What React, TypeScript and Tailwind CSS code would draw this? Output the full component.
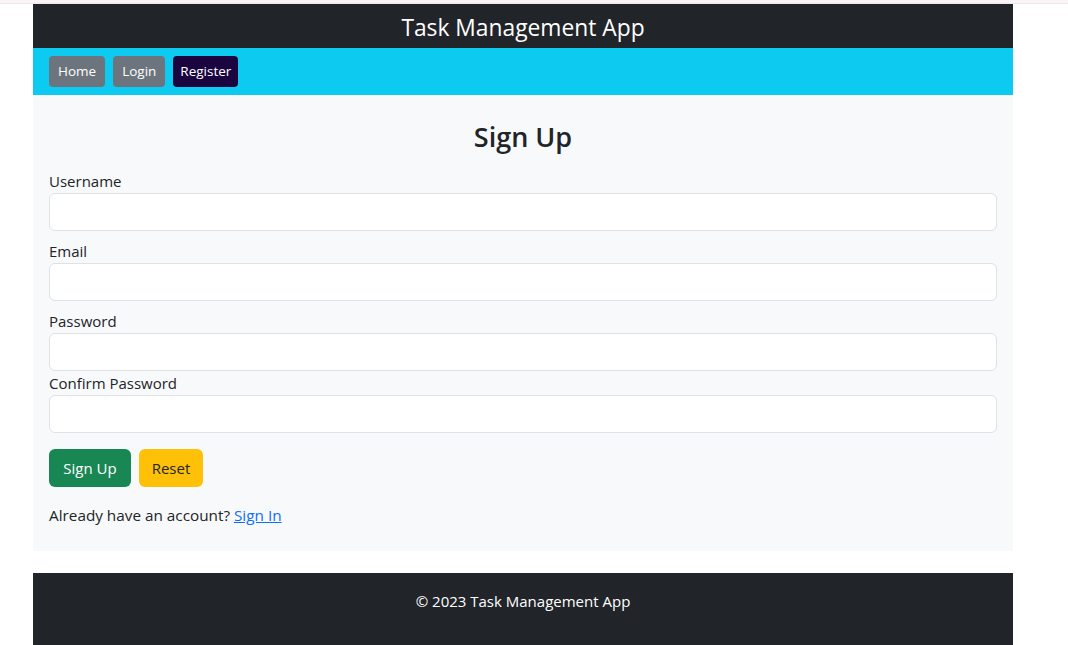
import { useState } from "react";

const fields = [
  { id: "username", label: "Username", type: "text", mb: "mb-2" },
  { id: "email", label: "Email", type: "email", mb: "mb-2" },
  { id: "password", label: "Password", type: "password", mb: "" },
  { id: "confirm", label: "Confirm Password", type: "password", mb: "" },
];

export default function App() {
  const [values, setValues] = useState<Record<string, string>>({});

  return (
    <div className="min-h-screen bg-white font-['Open_Sans',sans-serif] text-[#212529]">
      {/* top strip */}
      <div className="h-[4px] bg-[#f9f4f5] border-b border-[#eee6e8]" />

      <div className="ml-[33px] w-[980px]">
        {/* Header */}
        <header className="h-[44px] bg-[#212529] flex items-center justify-center pt-[4px]">
          <h1 className="text-[22.8px] text-white leading-none">Task Management App</h1>
        </header>

        {/* Nav */}
        <nav className="h-[47px] bg-[#0dcaf0] flex items-center gap-2 px-4">
          <button className="h-[31px] px-[9px] rounded bg-[#6c757d] text-white text-[13.5px]">Home</button>
          <button className="h-[31px] px-[9px] rounded bg-[#6c757d] text-white text-[13.5px]">Login</button>
          <button className="h-[31px] px-[7px] rounded bg-[#1a0540] text-white text-[13.5px]">Register</button>
        </nav>

        {/* Form */}
        <main className="bg-[#f8f9fa] px-4 pt-[22px] pb-[24px]">
          <h2 className="text-center text-[27px] font-semibold leading-[40px] mb-[12px]">Sign Up</h2>
          <form onSubmit={(e) => e.preventDefault()}>
            {fields.map((f) => (
              <div key={f.id} className={f.mb}>
                <label htmlFor={f.id} className="block text-[15px] leading-[24px]">
                  {f.label}
                </label>
                <input
                  id={f.id}
                  type={f.type}
                  value={values[f.id] ?? ""}
                  onChange={(e) => setValues({ ...values, [f.id]: e.target.value })}
                  className="block w-full h-[38px] rounded-md border border-[#dee2e6] bg-white px-3 outline-none"
                />
              </div>
            ))}

            <div className="flex gap-2 mt-4">
              <button type="submit" className="h-[38px] w-[82px] rounded-md bg-[#198754] text-white text-[15px]">
                Sign Up
              </button>
              <button
                type="reset"
                onClick={() => setValues({})}
                className="h-[38px] w-[64px] rounded-md bg-[#ffc107] text-[#212529] text-[15px]"
              >
                Reset
              </button>
            </div>
          </form>
          <p className="mt-[16px] text-[15.3px] leading-[24px]">
            Already have an account?{" "}
            <a href="#" className="text-[#0d6efd] underline">
              Sign In
            </a>
          </p>
        </main>

        {/* Footer */}
        <footer className="mt-[22px] h-[72px] bg-[#212529] flex justify-center pt-[16px]">
          <p className="text-white text-[15px] leading-[24px]">© 2023 Task Management App</p>
        </footer>
      </div>
    </div>
  );
}
